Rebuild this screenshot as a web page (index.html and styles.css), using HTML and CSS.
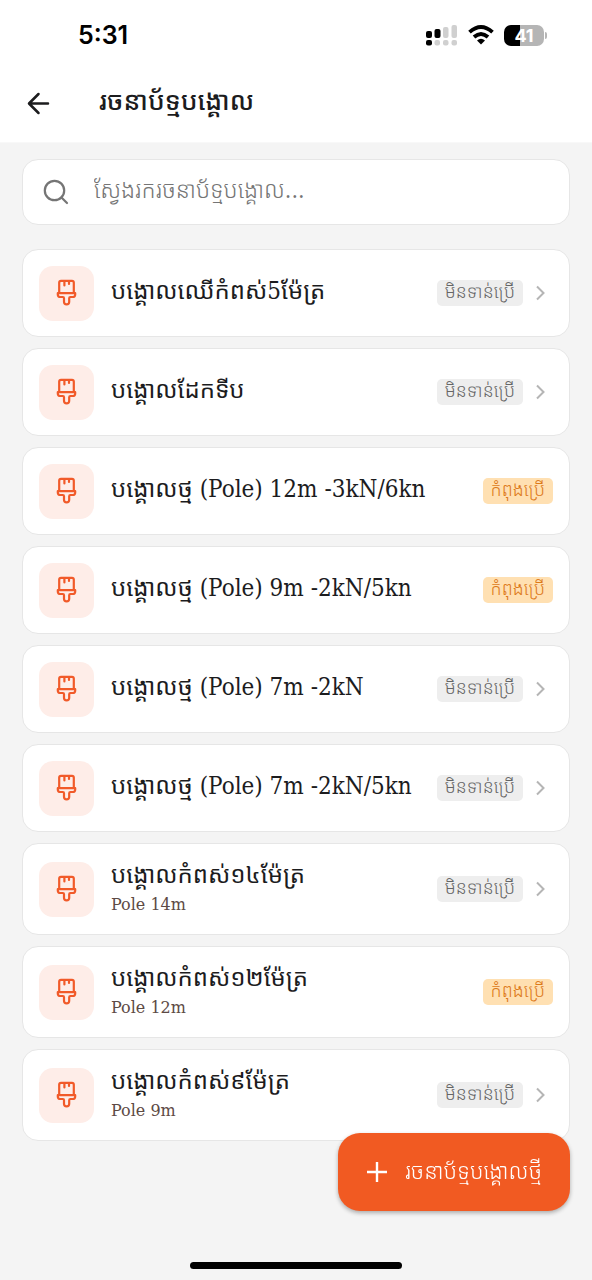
FILE: index.html
```
<!DOCTYPE html>
<html lang="km">
<head>
<meta charset="utf-8">
<meta name="viewport" content="width=device-width, initial-scale=1">
<title>រចនាប័ទ្មបង្គោល</title>
<link rel="stylesheet" href="styles.css">
</head>
<body>
<svg class="sprite" aria-hidden="true">
  <symbol id="brush" viewBox="0 0 28 28">
    <path d="M6.200 14.200V3.600Q6.200 1.800 8 1.800H19Q20.800 1.800 20.800 3.600V14.200M11.400 2V6.400M16 2V5M4.800 14.200H22.200V15.400Q22.200 18 19.600 18H17.400Q16.200 18 16.200 19.200V22.800Q16.200 25.400 13.600 25.400T11 22.800V19.200Q11 18 9.800 18H7.400Q4.800 18 4.800 15.400Z"/>
  </symbol>
  <symbol id="chevron" viewBox="0 0 12 18"><path d="M2 2.500L8.500 9L2 15.500"/></symbol>
</svg>
<header class="top">
  <div class="status">
    <span class="clock">5:31</span>
    <div class="indicators">
      <svg width="32" height="22" viewBox="0 0 32 22" aria-hidden="true">
        <g fill="#000"><rect x="0" y="7" width="6" height="7" rx="2"/><rect x="0" y="16" width="6" height="5.500" rx="2"/><rect x="8.500" y="5" width="6" height="9" rx="2"/></g>
        <g fill="#d0d0d0"><rect x="17" y="3" width="5.500" height="11" rx="2"/><rect x="25.500" y="1" width="5.500" height="13" rx="2"/><rect x="8.500" y="16" width="5.500" height="5.500" rx="2"/><rect x="17" y="16" width="5.500" height="5.500" rx="2"/><rect x="25.500" y="16" width="5.500" height="5.500" rx="2"/></g>
      </svg>
      <svg width="26" height="20" viewBox="0 0 26 20" aria-hidden="true">
        <path d="M1.500 7.200Q13-3.200 24.500 7.200M6 12Q13 5.800 20 12" fill="none" stroke="#000" stroke-width="3.800"/>
        <path d="M9 15.400Q13 12.200 17 15.400L13 19.600Z"/>
      </svg>
      <div class="battery"><span class="cell">41</span><span class="tip"></span></div>
    </div>
  </div>
  <div class="bar">
    <button class="back" type="button" aria-label="ត្រឡប់">
      <svg width="24" height="24" viewBox="0 0 24 24" aria-hidden="true"><path d="M21 12.500H2.500M11.500 3L2 12.500L11.500 22"/></svg>
    </button>
    <h1 class="title">រចនាប័ទ្មបង្គោល</h1>
  </div>
</header>
<main class="content">
  <label class="search">
    <svg width="26" height="26" viewBox="0 0 26 26" aria-hidden="true"><circle cx="11.500" cy="11.500" r="9.700"/><path d="M18.500 18.500L24 24"/></svg>
    <input class="field" type="search" aria-label="ស្វែងរក" placeholder="ស្វែងរករចនាប័ទ្មបង្គោល...">
  </label>
  <ul class="list">
    <li><a class="card" href="#"><span class="tile"><svg><use href="#brush"/></svg></span><span class="text"><span class="name">បង្គោលឈើកំពស់5ម៉ែត្រ</span></span><span class="badge">មិនទាន់ប្រើ</span><svg class="chevron"><use href="#chevron"/></svg></a></li>
    <li><a class="card" href="#"><span class="tile"><svg><use href="#brush"/></svg></span><span class="text"><span class="name">បង្គោលដែកទីប</span></span><span class="badge">មិនទាន់ប្រើ</span><svg class="chevron"><use href="#chevron"/></svg></a></li>
    <li><a class="card" href="#"><span class="tile"><svg><use href="#brush"/></svg></span><span class="text"><span class="name">បង្គោលថ្ម (Pole) 12m -3kN/6kn</span></span><span class="badge used">កំពុងប្រើ</span></a></li>
    <li><a class="card" href="#"><span class="tile"><svg><use href="#brush"/></svg></span><span class="text"><span class="name">បង្គោលថ្ម (Pole) 9m -2kN/5kn</span></span><span class="badge used">កំពុងប្រើ</span></a></li>
    <li><a class="card" href="#"><span class="tile"><svg><use href="#brush"/></svg></span><span class="text"><span class="name">បង្គោលថ្ម (Pole) 7m -2kN</span></span><span class="badge">មិនទាន់ប្រើ</span><svg class="chevron"><use href="#chevron"/></svg></a></li>
    <li><a class="card" href="#"><span class="tile"><svg><use href="#brush"/></svg></span><span class="text"><span class="name">បង្គោលថ្ម (Pole) 7m -2kN/5kn</span></span><span class="badge">មិនទាន់ប្រើ</span><svg class="chevron"><use href="#chevron"/></svg></a></li>
    <li><a class="card tall" href="#"><span class="tile"><svg><use href="#brush"/></svg></span><span class="text"><span class="name">បង្គោលកំពស់១៤ម៉ែត្រ</span><span class="sub">Pole 14m</span></span><span class="badge">មិនទាន់ប្រើ</span><svg class="chevron"><use href="#chevron"/></svg></a></li>
    <li><a class="card tall" href="#"><span class="tile"><svg><use href="#brush"/></svg></span><span class="text"><span class="name">បង្គោលកំពស់១២ម៉ែត្រ</span><span class="sub">Pole 12m</span></span><span class="badge used">កំពុងប្រើ</span></a></li>
    <li><a class="card tall" href="#"><span class="tile"><svg><use href="#brush"/></svg></span><span class="text"><span class="name">បង្គោលកំពស់៩ម៉ែត្រ</span><span class="sub">Pole 9m</span></span><span class="badge">មិនទាន់ប្រើ</span><svg class="chevron"><use href="#chevron"/></svg></a></li>
  </ul>
</main>
<button class="fab" type="button">
  <svg width="22" height="22" viewBox="0 0 22 22" aria-hidden="true"><path d="M11 1V21M1 11H21"/></svg>
  <span class="label">រចនាប័ទ្មបង្គោលថ្មី</span>
</button>
<div class="home"></div>
</body>
</html>
```
FILE: styles.css
```
* { box-sizing: border-box; }
body {
  margin: 0;
  min-height: 100vh;
  background: #f4f4f4;
  color: #1c1c1e;
  font-family: "DejaVu Serif Condensed", "Noto Sans Khmer", "Khmer OS", serif;
}
button { border: 0; padding: 0; background: none; font: inherit; color: inherit; }
.sprite { display: none; }
.top { background: #fff; border-bottom: 1px solid #f8f8f8; }
.status {
  display: flex;
  align-items: center;
  justify-content: space-between;
  height: 70px;
  padding: 0 45px 0 78px;
}
.clock { font: 600 25px/32px Inter, sans-serif; color: #000; }
.indicators { display: flex; align-items: center; gap: 10px; }
.battery { display: flex; align-items: center; gap: 1px; }
.cell {
  width: 40px;
  border-radius: 7px;
  background: linear-gradient(90deg, #000 41%, #b5b5b5 41%);
  color: #fff;
  font: 700 18px/21px Inter, sans-serif;
  text-align: center;
}
.tip { width: 2px; height: 7px; border-radius: 0 2px 2px 0; background: #b5b5b5; }
.bar { display: flex; align-items: center; gap: 48px; height: 72px; padding: 0 27px 6px; }
.back { display: flex; }
.back svg { fill: none; stroke: #1c1c1e; stroke-width: 2.500; stroke-linecap: round; stroke-linejoin: round; }
.title { margin: 0; padding-bottom: 4px; font-size: 26px; line-height: 48px; font-weight: 500; }
.content { padding: 16px 22px 100px; }
.search {
  display: flex;
  align-items: center;
  gap: 25px;
  height: 66px;
  padding: 0 20px;
  border: 1px solid #e6e6e6;
  border-radius: 16px;
  background: #fff;
}
.search svg { flex: none; fill: none; stroke: #757575; stroke-width: 2.200; stroke-linecap: round; }
.field { flex: 1; min-width: 0; height: 48px; padding: 0 0 4px; border: 0; outline: 0; background: none; font: inherit; font-weight: 300; font-size: 23px; color: inherit; }
.field::placeholder { color: #757575; opacity: 1; }
.list { display: flex; flex-direction: column; gap: 11px; margin: 24px 0 0; padding: 0; list-style: none; }
.card {
  display: flex;
  align-items: center;
  height: 88px;
  padding: 0 16px;
  border: 1px solid #e6e6e6;
  border-radius: 16px;
  background: #fff;
  color: inherit;
  text-decoration: none;
}
.tall { height: 92px; }
.tile { display: grid; place-items: center; flex: none; width: 55px; height: 55px; margin-right: 17px; border-radius: 14px; background: #feede8; }
.tile svg { width: 28px; height: 28px; fill: none; stroke: #f15a29; stroke-width: 2.200; stroke-linejoin: round; stroke-linecap: round; }
.text { flex: 1; min-width: 0; display: flex; flex-direction: column; padding-bottom: 4px; }
.name { font-size: 24px; line-height: 36px; white-space: nowrap; }
.sub { font-family: "DejaVu Serif", serif; font-size: 16px; line-height: 24px; color: #5d4a45; }
.badge { flex: none; height: 26px; padding: 0 8px; border-radius: 5px; background: #eee; color: #666; font-size: 18px; font-weight: 300; line-height: 24px; white-space: nowrap; }
.used { background: #ffe0b2; color: #dd7a1a; }
.chevron { flex: none; width: 12px; height: 18px; margin: 0 6px 0 12px; fill: none; stroke: #b5b5b5; stroke-width: 2; }
.fab {
  position: fixed;
  right: 22px;
  bottom: 69px;
  display: flex;
  align-items: center;
  gap: 17px;
  height: 78px;
  padding: 0 28px;
  border-radius: 22px;
  background: #f15a22;
  box-shadow: 0 2px 4px rgba(0, 0, 0, .3);
  color: #fff;
  font-size: 22px;
  font-weight: 300;
  white-space: nowrap;
}
.fab svg { fill: none; stroke: #fff; stroke-width: 2.400; }
.label { padding-bottom: 4px; }
.home { position: fixed; left: 50%; bottom: 11px; width: 212px; height: 7px; margin-left: -106px; border-radius: 4px; background: #000; }
```
